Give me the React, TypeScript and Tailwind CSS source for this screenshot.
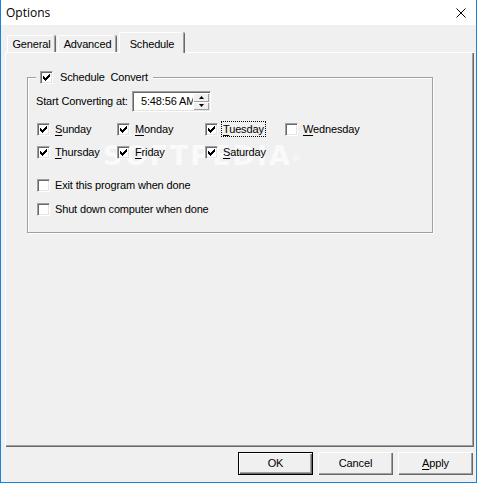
import React from 'react';

const ui = "font-['Liberation_Sans',Arial,sans-serif] text-[11px] tracking-[-0.15px] text-black";

// classic 13px sunken checkbox
function Box({ checked }: { checked?: boolean }) {
  return (
    <span className="inline-flex h-[13px] w-[13px] shrink-0 items-center justify-center border border-t-[#a0a0a0] border-l-[#a0a0a0] border-r-white border-b-white bg-white shadow-[inset_1px_1px_0_#696969,inset_-1px_-1px_0_#e3e3e3]">
      {checked && (
        <svg width="9" height="9" viewBox="0 0 9 9" shapeRendering="crispEdges">
          <path d="M1 3h1v1h1v1h1V4h1V3h1V2h1V1h1v3H7v1H6v1H5v1H4v1H3V7H2V6H1z" fill="#000" />
        </svg>
      )}
    </span>
  );
}

function Check({
  label,
  checked,
  focus,
  under = true,
  width,
}: {
  label: string;
  checked?: boolean;
  focus?: boolean;
  under?: boolean;
  width?: string;
}) {
  return (
    <div className={`flex h-[16px] items-center gap-[5px] ${width ?? ''}`}>
      <Box checked={checked} />
      <span className={`leading-[14px] ${focus ? 'outline outline-1 outline-dotted outline-black -ml-px px-px' : ''}`}>
        {under ? (
          <>
            <span className="underline underline-offset-[2px]">{label[0]}</span>
            {label.slice(1)}
          </>
        ) : (
          label
        )}
      </span>
    </div>
  );
}

function Tab({ label, selected, width }: { label: string; selected?: boolean; width: string }) {
  if (selected) {
    return (
      <div
        className={`relative z-10 -mb-px flex h-[21px] items-start justify-center rounded-t-[2px] border-l border-t border-white bg-[#f0f0f0] pt-[3px] shadow-[inset_-1px_0_0_#a0a0a0,1px_0_0_#696969] ${width}`}
      >
        {label}
      </div>
    );
  }
  return (
    <div
      className={`flex h-[17px] items-center justify-center rounded-t-[2px] border-l border-t border-white bg-[#f0f0f0] shadow-[inset_-1px_0_0_#a0a0a0,1px_0_0_#696969] ${width}`}
    >
      {label}
    </div>
  );
}

function Btn({ label, def, u }: { label: string; def?: boolean; u?: boolean }) {
  return (
    <button
      className={`flex h-[23px] w-[75px] items-center justify-center bg-[#f0f0f0] ${
        def
          ? 'border border-black shadow-[inset_1px_1px_0_white,inset_-1px_-1px_0_#696969,inset_-2px_-2px_0_#a0a0a0]'
          : 'shadow-[inset_1px_1px_0_white,inset_-1px_-1px_0_#696969,inset_-2px_-2px_0_#a0a0a0]'
      }`}
    >
      {u ? (
        <span>
          <span className="underline underline-offset-[2px]">{label[0]}</span>
          {label.slice(1)}
        </span>
      ) : (
        label
      )}
    </button>
  );
}

export default function App() {
  return (
    <div className={`flex h-[483px] w-[477px] flex-col overflow-hidden border-x border-b border-[#1883d7] bg-[#f0f0f0] ${ui}`}>
      {/* Title bar */}
      <div className="flex h-[25px] shrink-0 items-center justify-between bg-white pl-[5px] pr-[10px]">
        <span className="font-['Open_Sans','Noto_Sans',sans-serif] text-[12px] tracking-normal">Options</span>
        <svg width="10" height="10" viewBox="0 0 10 10">
          <path d="M0.5 0.5L9.5 9.5M9.5 0.5L0.5 9.5" stroke="#000" strokeWidth="1" />
        </svg>
      </div>

      {/* Tabs */}
      <div className="mt-[7px] flex h-[20px] items-end gap-[1px] pl-[6px]">
        <Tab label="General" width="w-[48px]" />
        <div className="w-px" />
        <Tab label="Advanced" width="w-[58px]" />
        <div className="w-px" />
        <Tab label="Schedule" selected width="w-[65px]" />
      </div>

      {/* Tab panel */}
      <div className="ml-[4px] h-[395px] w-[469px] shrink-0 border-l border-t border-white shadow-[inset_-1px_-1px_0_#696969,inset_-2px_-2px_0_#a0a0a0]">
        <div className="relative ml-[21px] mt-[24px] h-[156px] w-[406px] border border-[#a0a0a0] shadow-[inset_1px_1px_0_white,1px_1px_0_white]">
          {/* watermark, behind the controls */}
          <div className="pointer-events-none absolute left-[75px] top-[58px] font-['DejaVu_Sans',sans-serif] text-[27px] font-bold tracking-[2px] text-white/70">
            SOFTPEDIA<sup className="text-[9px]">®</sup>
          </div>

          {/* legend */}
          <div className="absolute left-[8px] top-[-8px] flex h-[14px] items-center gap-[7px] bg-[#f0f0f0] pl-[4px] pr-[5px]">
            <Box checked />
            <span>Schedule&nbsp; Convert</span>
          </div>

          <div className="relative flex flex-col pl-[8px]">
            <div className="mt-[13px] flex h-[21px] items-center">
              <span className="w-[96px]">Start Converting at:</span>
              <div className="flex h-[21px] w-[79px] border border-t-[#a0a0a0] border-l-[#a0a0a0] border-r-white border-b-white bg-white shadow-[inset_1px_1px_0_#696969,inset_-1px_-1px_0_#e3e3e3]">
                <div className="flex-1 overflow-hidden whitespace-nowrap pl-[8px] pt-[2px] leading-[15px]">5:48:56 AM</div>
                <div className="flex w-[17px] flex-col py-[1px] pr-[1px]">
                  <div className="flex flex-1 items-center justify-center bg-[#f0f0f0] shadow-[inset_1px_1px_0_white,inset_-1px_-1px_0_#a0a0a0]">
                    <svg width="5" height="3" viewBox="0 0 5 3">
                      <path d="M2.5 0L5 3H0z" fill="#000" />
                    </svg>
                  </div>
                  <div className="flex flex-1 items-center justify-center bg-[#f0f0f0] shadow-[inset_1px_1px_0_white,inset_-1px_-1px_0_#a0a0a0]">
                    <svg width="5" height="3" viewBox="0 0 5 3">
                      <path d="M0 0H5L2.5 3z" fill="#000" />
                    </svg>
                  </div>
                </div>
              </div>
            </div>

            <div className="mt-[9px] flex pl-[1px]">
              <Check label="Sunday" checked width="w-[80px]" />
              <Check label="Monday" checked width="w-[88px]" />
              <Check label="Tuesday" checked focus width="w-[80px]" />
              <Check label="Wednesday" />
            </div>
            <div className="mt-[7px] flex pl-[1px]">
              <Check label="Thursday" checked width="w-[80px]" />
              <Check label="Friday" checked width="w-[88px]" />
              <Check label="Saturday" checked width="w-[80px]" />
            </div>

            <div className="mt-[17px] pl-[1px]">
              <Check label="Exit this program when done" under={false} />
            </div>
            <div className="mt-[8px] pl-[1px]">
              <Check label="Shut down computer when done" under={false} />
            </div>
          </div>
        </div>
      </div>

      {/* Buttons */}
      <div className="mt-[5px] flex justify-end gap-[5px] pr-[3px]">
        <Btn label="OK" def />
        <Btn label="Cancel" />
        <Btn label="Apply" u />
      </div>
    </div>
  );
}
